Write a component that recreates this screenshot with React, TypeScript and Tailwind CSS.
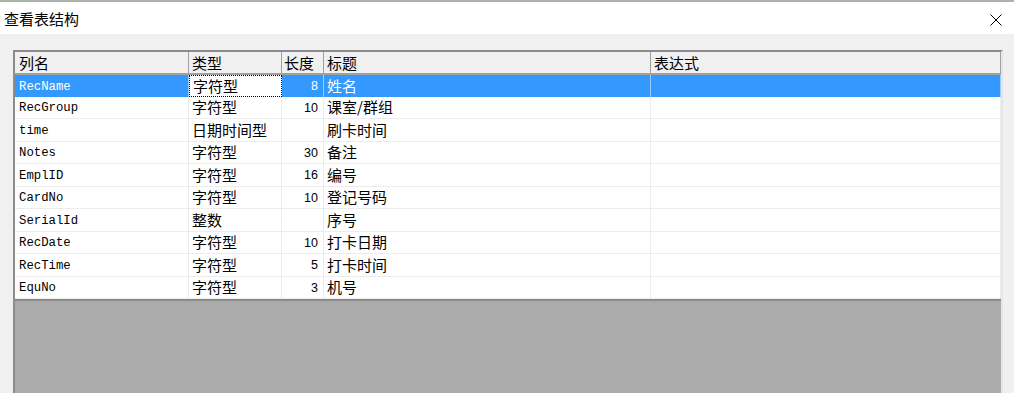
import React from 'react'

const cjk = '"Noto Sans CJK SC", "Noto Sans", sans-serif'

const rows = [
  { name: 'RecName', type: '字符型', len: '8', title: '姓名' },
  { name: 'RecGroup', type: '字符型', len: '10', title: '课室/群组' },
  { name: 'time', type: '日期时间型', len: '', title: '刷卡时间' },
  { name: 'Notes', type: '字符型', len: '30', title: '备注' },
  { name: 'EmplID', type: '字符型', len: '16', title: '编号' },
  { name: 'CardNo', type: '字符型', len: '10', title: '登记号码' },
  { name: 'SerialId', type: '整数', len: '', title: '序号' },
  { name: 'RecDate', type: '字符型', len: '10', title: '打卡日期' },
  { name: 'RecTime', type: '字符型', len: '5', title: '打卡时间' },
  { name: 'EquNo', type: '字符型', len: '3', title: '机号' },
]

// rows alternate 22/23px so the lines land where the screenshot has them
const heights = ['h-[22px]', 'h-[22px]', 'h-[23px]', 'h-[22px]', 'h-[23px]', 'h-[22px]', 'h-[23px]', 'h-[22px]', 'h-[23px]', 'h-[22px]']

function Header() {
  const cell = 'flex items-center border-r border-[#a0a0a0] pb-[1px] text-[15px] text-black leading-none'
  return (
    <div className="flex h-[23px] border-b-2 border-[#a0a0a0] bg-[#f0f0f0]" style={{ fontFamily: cjk }}>
      <div className={`${cell} w-[174px] pl-[4px]`}>列名</div>
      <div className={`${cell} w-[93px] pl-[3px]`}>类型</div>
      <div className={`${cell} w-[42px] pl-[2px]`}>长度</div>
      <div className={`${cell} w-[327px] pl-[3px]`}>标题</div>
      <div className={`${cell} w-[350px] pl-[3px]`}>表达式</div>
    </div>
  )
}

function Row({ row, index }: { row: (typeof rows)[number]; index: number }) {
  const selected = index === 0
  const line = selected ? 'border-[#9ccbff]' : 'border-[#ececec]'
  const text = selected ? 'text-white' : 'text-black'
  const cell = `flex items-center border-r ${line} ${text} leading-none`
  return (
    <div
      className={`flex ${heights[index]} ${selected ? 'bg-[#3399ff]' : 'bg-white border-b border-[#ececec]'}`}
    >
      <div
        className={`${cell} w-[174px] pl-[4px] pt-[2px] text-[12.3px]`}
        style={{ fontFamily: '"Liberation Mono", "DejaVu Sans Mono", monospace' }}
      >
        {row.name}
      </div>
      {selected ? (
        <div
          className="flex w-[93px] items-center border border-dotted border-black bg-white pb-[2px] pl-[3px] text-[15px] leading-none text-black"
          style={{ fontFamily: cjk }}
        >
          {row.type}
        </div>
      ) : (
        <div className={`${cell} w-[93px] pb-[2px] pl-[3px] text-[15px]`} style={{ fontFamily: cjk }}>
          {row.type}
        </div>
      )}
      <div
        className={`${cell} w-[42px] justify-end pr-[5px] pt-[1px] text-[12.5px]`}
        style={{ fontFamily: '"Liberation Sans", Arial, sans-serif' }}
      >
        {row.len}
      </div>
      <div className={`${cell} w-[327px] pb-[2px] pl-[3px] text-[15px]`} style={{ fontFamily: cjk }}>
        {row.title}
      </div>
      <div className={`${cell} w-[350px]`} />
    </div>
  )
}

export default function App() {
  return (
    <div className="relative h-[393px] w-[1014px] overflow-hidden bg-[#f0f0f0]">
      <div className="h-[2px] bg-[#aab4aa]" />
      <div className="flex h-[32px] items-center justify-between bg-white pl-[4px] pr-[12px]">
        <span className="pt-[1px] text-[15px] leading-none text-black" style={{ fontFamily: cjk }}>
          查看表结构
        </span>
        <svg width="12" height="12" viewBox="0 0 12 12" className="mt-[4px]">
          <path d="M0.5 0.5 L11.5 11.5 M11.5 0.5 L0.5 11.5" stroke="#000" strokeWidth="1" fill="none" />
        </svg>
      </div>

      <div className="pl-[13px] pt-[16px]">
        <div className="flex w-[990px] flex-col border-t-2 border-l-2 border-r-2 border-t-[#8c8c8c] border-l-[#8c8c8c] border-r-[#e6e6e6]">
          <Header />
          {rows.map((row, i) => (
            <Row key={row.name} row={row} index={i} />
          ))}
          <div className="h-[120px] border-t-2 border-[#8a8a8a] bg-[#ababab]" />
        </div>
      </div>
    </div>
  )
}
